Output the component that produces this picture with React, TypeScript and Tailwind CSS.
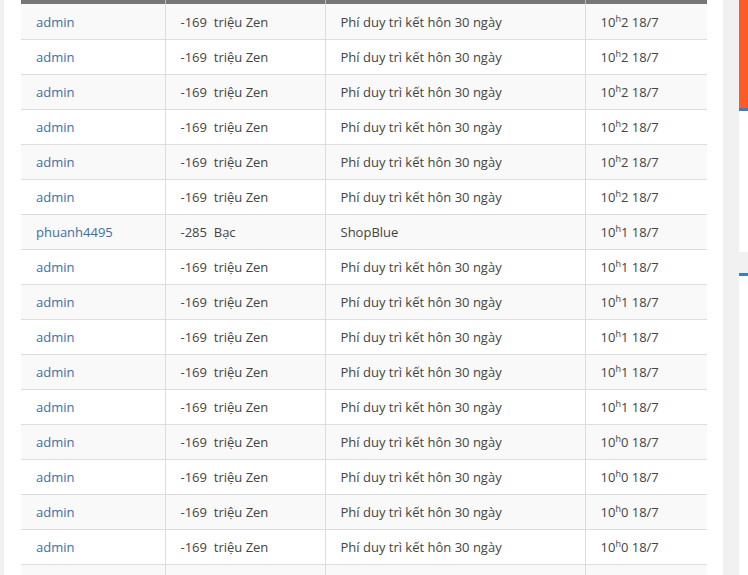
import React from "react";

type Row = { user: string; amount: string; unit: string; note: string; h: string };

const rows: Row[] = [
  ...Array(6).fill(0).map(() => ({ user: "admin", amount: "-169", unit: "triệu Zen", note: "Phí duy trì kết hôn 30 ngày", h: "2" })),
  { user: "phuanh4495", amount: "-285", unit: "Bạc", note: "ShopBlue", h: "1" },
  ...Array(5).fill(0).map(() => ({ user: "admin", amount: "-169", unit: "triệu Zen", note: "Phí duy trì kết hôn 30 ngày", h: "1" })),
  ...Array(4).fill(0).map(() => ({ user: "admin", amount: "-169", unit: "triệu Zen", note: "Phí duy trì kết hôn 30 ngày", h: "0" })),
];

export default function App() {
  return (
    <div
      className="flex h-[575px] w-[748px] overflow-hidden bg-[#f1f1f1] text-[13px] text-[#444]"
      style={{ fontFamily: '"Open Sans", "Noto Sans", sans-serif' }}
    >
      <div className="ml-[4px] h-full w-[719px] shrink-0 bg-white pl-[17px] pr-[16px]">
        <table className="w-[686px] table-fixed border-collapse">
          <colgroup>
            <col className="w-[144px]" />
            <col className="w-[160px]" />
            <col className="w-[260px]" />
            <col className="w-[122px]" />
          </colgroup>
          <thead>
            <tr>
              <th className="h-[4px] bg-[#777] p-0"></th>
              <th className="h-[4px] border-l border-[#bbb] bg-[#777] p-0"></th>
              <th className="h-[4px] border-l border-[#bbb] bg-[#777] p-0"></th>
              <th className="h-[4px] border-l border-[#bbb] bg-[#777] p-0"></th>
            </tr>
          </thead>
          <tbody>
            {rows.map((r, i) => (
              <tr key={i} className={i % 2 === 0 ? "bg-[#f9f9f9]" : "bg-white"}>
                <td className="h-[35px] border-b border-[#ddd] pl-[15px] pt-[2px] align-middle leading-none">
                  <span className="text-[#3b6fa7]">{r.user}</span>
                </td>
                <td className="h-[35px] border-b border-l border-[#ddd] pl-[15px] pt-[2px] align-middle leading-none">
                  {r.amount}&nbsp; {r.unit}
                </td>
                <td className="h-[35px] border-b border-l border-[#ddd] pl-[15px] pt-[2px] align-middle leading-none">
                  {r.note}
                </td>
                <td className="h-[35px] border-b border-l border-[#ddd] pl-[15px] pt-[2px] align-middle leading-none">
                  10<span className="relative -top-[5px] text-[9px]">h</span>
                  {r.h} 18/7
                </td>
              </tr>
            ))}
            <tr className="bg-[#f9f9f9]">
              <td className="h-[35px] border-b border-[#ddd] pl-[15px]"></td>
              <td className="h-[35px] border-b border-l border-[#ddd] pl-[15px]"></td>
              <td className="h-[35px] border-b border-l border-[#ddd] pl-[15px]"></td>
              <td className="h-[35px] border-b border-l border-[#ddd] pl-[15px]"></td>
            </tr>
          </tbody>
        </table>
      </div>
      <div className="ml-[16px] flex w-[200px] shrink-0 flex-col">
        <div className="h-[108px] bg-[#fd5a26]"></div>
        <div className="h-[3px] bg-[#3c7fc0]"></div>
        <div className="h-[141px] bg-white"></div>
        <div className="h-[21px]"></div>
        <div className="h-[3px] bg-[#3c7fc0]"></div>
        <div className="flex-1 bg-white"></div>
      </div>
    </div>
  );
}
